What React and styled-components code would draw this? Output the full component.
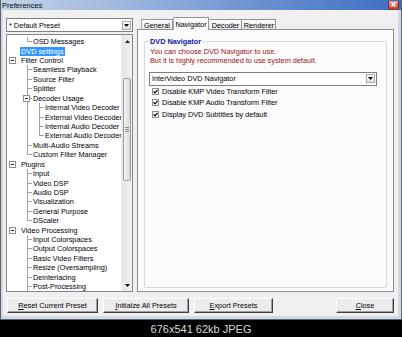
import React from 'react'
import styled, { createGlobalStyle } from 'styled-components'

const Global = createGlobalStyle`
  html, body { margin: 0; padding: 0; background: #000; }
  body { font-family: "Liberation Sans", Arial, sans-serif; }
`

const Shot = styled.div`
  width: 402px;
  height: 337px;
  display: flex;
  flex-direction: column;
  background: #000;
  overflow: hidden;
`

const Window = styled.div`
  height: 320px;
  box-sizing: border-box;
  display: flex;
  flex-direction: column;
  border: 1px solid #5b626d;
  border-top: none;
  background: #d3d9e2;
`

const TitleBar = styled.div`
  height: 10px;
  flex: none;
  display: flex;
  align-items: center;
  padding-left: 1px;
  background: linear-gradient(to right, #c3d2e8 0%, #9fb8de 30%, #6a90cf 65%, #3f6fc2 100%);
  font-size: 7.5px;
  color: #0c0c0c;
`

const CloseBox = styled.div`
  margin-left: auto;
  margin-right: 2px;
  width: 11px;
  height: 9px;
  box-sizing: border-box;
  border: 1px solid #7b3027;
  border-top: none;
  border-radius: 0 0 2px 2px;
  background: linear-gradient(#e9a38f, #c8402c);
  display: flex;
  align-items: center;
  justify-content: center;
`

const Body = styled.div`
  flex: 1;
  margin: 0 3px 3px 2px;
  padding: 7px 4px 3px 3px;
  background: #f0f0f0;
  display: flex;
  flex-direction: column;
  gap: 6px;
`

const Main = styled.div`
  height: 275px;
  display: flex;
  gap: 4px;
`

const LeftPane = styled.div`
  width: 127px;
  display: flex;
  flex-direction: column;
  gap: 2px;
  padding-top: 1px;
  box-sizing: border-box;
`

const Combo = styled.div`
  height: 14px;
  width: ${p => p.$w || 'auto'};
  flex: none;
  box-sizing: border-box;
  border: 1px solid #7f7f7f;
  background: #fff;
  display: flex;
  align-items: center;
  padding: 0 1px 0 2px;
  font-size: 7.3px;
  color: #000;
  margin-left: ${p => p.$ml || 0}px;
`

const ComboText = styled.span`
  flex: 1;
  white-space: nowrap;
`

const ComboButton = styled.span`
  width: 9px;
  height: 9px;
  box-sizing: border-box;
  border: 1px solid #a8a8a8;
  background: linear-gradient(#fbfbfb, #e4e4e4);
  display: flex;
  align-items: center;
  justify-content: center;
`

const Tree = styled.div`
  flex: 1;
  box-sizing: border-box;
  border: 1px solid #828790;
  background: #fff;
  display: flex;
  overflow: hidden;
`

const TreeList = styled.div`
  flex: 1;
  padding-top: 2px;
  overflow: hidden;
`

const Row = styled.div`
  height: 9.43px;
  display: flex;
  align-items: stretch;
  white-space: nowrap;
  font-size: 7.3px;
  color: #000;
`

const RootCell = styled.span`
  width: 13px;
  flex: none;
  display: flex;
  align-items: center;
  padding-left: 2px;
  box-sizing: border-box;
`

const Guide = styled.span`
  width: 12px;
  flex: none;
  background: ${p => (p.$on ? 'linear-gradient(#a3a3a3, #a3a3a3) 7px 0 / 1px 100% no-repeat' : 'none')};
`

const Branch = styled.span`
  width: 12px;
  flex: none;
  display: flex;
  align-items: center;
  padding-left: 3px;
  box-sizing: border-box;
  background:
    linear-gradient(#a3a3a3, #a3a3a3) 7px 0 / 1px ${p => (p.$more ? '100%' : '50%')} no-repeat,
    linear-gradient(#a3a3a3, #a3a3a3) 7px 50% / 5px 1px no-repeat;
`

const Expander = styled.span`
  width: 7px;
  height: 7px;
  box-sizing: border-box;
  border: 1px solid #8e8e8e;
  background: linear-gradient(#222, #222) center / 3px 1px no-repeat, #fff;
`

const Label = styled.span`
  align-self: center;
  line-height: 9px;
  padding: 0 1px;
  background: ${p => (p.$selected ? '#3399ff' : 'transparent')};
  color: ${p => (p.$selected ? '#fff' : '#000')};
`

const ScrollBar = styled.div`
  width: 10px;
  flex: none;
  display: flex;
  flex-direction: column;
  background: linear-gradient(to right, #e6e6e6, #f2f2f2);
  border-left: 1px solid #ececec;
`

const ScrollArrow = styled.div`
  height: 12px;
  display: flex;
  align-items: center;
  justify-content: center;
`

const Track = styled.div`
  flex: 1;
`

const Thumb = styled.div`
  margin: 0 1px;
  box-sizing: border-box;
  border: 1px solid #9c9c9c;
  border-radius: 2px;
  background:
    linear-gradient(#8a8a8a, #8a8a8a) center calc(50% - 2px) / 4px 1px no-repeat,
    linear-gradient(#8a8a8a, #8a8a8a) center 50% / 4px 1px no-repeat,
    linear-gradient(#8a8a8a, #8a8a8a) center calc(50% + 2px) / 4px 1px no-repeat,
    linear-gradient(to right, #f4f4f4, #d9d9d9);
`

const RightPane = styled.div`
  flex: 1;
  display: flex;
  flex-direction: column;
`

const TabStrip = styled.div`
  height: 13px;
  flex: none;
  display: flex;
  align-items: flex-end;
  padding-left: 4px;
  margin-bottom: -1px;
`

const Tab = styled.div`
  width: ${p => p.$w}px;
  height: ${p => (p.$active ? 13 : 11)}px;
  box-sizing: border-box;
  display: flex;
  align-items: center;
  justify-content: center;
  font-size: 7.3px;
  color: #000;
  border: 1px solid #8f939b;
  border-bottom: ${p => (p.$active ? 'none' : '1px solid #898c95')};
  border-left-color: ${p => (p.$first || p.$active ? '#a9adb4' : 'transparent')};
  background: ${p => (p.$active ? '#fbfbfb' : 'linear-gradient(#fbfbfb, #ececec)')};
  padding-top: ${p => (p.$active ? 0 : 1)}px;
  position: relative;
  z-index: ${p => (p.$active ? 1 : 0)};
`

const Panel = styled.div`
  flex: 1;
  box-sizing: border-box;
  border: 1px solid #898c95;
  background: #fbfbfb;
  display: flex;
  flex-direction: column;
`

const Group = styled.fieldset`
  flex: 1;
  margin: 7px 6px 3px 6px;
  padding: 0 5px;
  border: 1px solid #d5dbe2;
  border-radius: 2px;
  min-width: 0;
`

const Legend = styled.legend`
  padding: 0 1px;
  margin-left: -1px;
  font-size: 7.3px;
  font-weight: bold;
  line-height: 9px;
  color: #1020a8;
`

const Note = styled.div`
  font-size: 7.3px;
  line-height: 9.3px;
  color: #9a1414;
  margin-top: ${p => p.$mt || 0}px;
  white-space: nowrap;
`

const ComboWrap = styled.div`
  margin-top: 6px;
`

const CheckRow = styled.div`
  height: 11.6px;
  display: flex;
  align-items: center;
  gap: 3px;
  padding-left: 2px;
  font-size: 7.3px;
  color: #000;
  white-space: nowrap;
`

const CheckBox = styled.span`
  width: 7px;
  height: 7px;
  box-sizing: border-box;
  border: 1px solid #8f8f8f;
  background: #fff;
  display: flex;
  align-items: center;
  justify-content: center;
`

const ButtonRow = styled.div`
  height: 15px;
  flex: none;
  display: flex;
  gap: 5px;
  padding-left: 1px;
`

const Button = styled.div`
  width: ${p => p.$w}px;
  margin-left: ${p => (p.$push ? 'auto' : 0)};
  box-sizing: border-box;
  border: 1px solid;
  border-color: #ffffff #3f3f3f #3f3f3f #ffffff;
  box-shadow: inset -1px -1px 0 #a0a0a0;
  background: #ececec;
  display: flex;
  align-items: center;
  justify-content: center;
  font-size: 7.3px;
  color: #000;
  white-space: nowrap;
`

const Key = styled.span`
  text-decoration: underline;
`

const Caption = styled.div`
  flex: 1;
  display: flex;
  align-items: center;
  justify-content: center;
  color: #d9d9d9;
  font-size: 11px;
  padding-top: 1px;
`

const DownTri = () => (
  <svg width="5" height="3" viewBox="0 0 5 3">
    <polygon points="0,0 5,0 2.5,3" fill="#000" />
  </svg>
)

const UpTri = () => (
  <svg width="5" height="3" viewBox="0 0 5 3">
    <polygon points="0,3 5,3 2.5,0" fill="#222" />
  </svg>
)

const Tick = () => (
  <svg width="5" height="5" viewBox="0 0 5 5">
    <polyline points="0.5,2.3 2,3.8 4.6,0.8" fill="none" stroke="#000" strokeWidth="1.2" />
  </svg>
)

const tree = [
  { label: 'OSD Messages', depth: 1, more: false },
  { label: 'DVD settings', depth: 0, selected: true },
  { label: 'Filter Control', depth: 0, open: true },
  { label: 'Seamless Playback', depth: 1, more: true },
  { label: 'Source Filter', depth: 1, more: true },
  { label: 'Splitter', depth: 1, more: true },
  { label: 'Decoder Usage', depth: 1, more: true, open: true },
  { label: 'Internal Video Decoder', depth: 2, guides: [true], more: true },
  { label: 'External Video Decoder', depth: 2, guides: [true], more: true },
  { label: 'Internal Audio Decoder', depth: 2, guides: [true], more: true },
  { label: 'External Audio Decoder', depth: 2, guides: [true], more: false },
  { label: 'Multi-Audio Streams', depth: 1, more: true },
  { label: 'Custom Filter Manager', depth: 1, more: false },
  { label: 'Plugins', depth: 0, open: true },
  { label: 'Input', depth: 1, more: true },
  { label: 'Video DSP', depth: 1, more: true },
  { label: 'Audio DSP', depth: 1, more: true },
  { label: 'Visualization', depth: 1, more: true },
  { label: 'General Purpose', depth: 1, more: true },
  { label: 'DScaler', depth: 1, more: false },
  { label: 'Video Processing', depth: 0, open: true },
  { label: 'Input Colorspaces', depth: 1, more: true },
  { label: 'Output Colorspaces', depth: 1, more: true },
  { label: 'Basic Video Filters', depth: 1, more: true },
  { label: 'Resize (Oversampling)', depth: 1, more: true },
  { label: 'Deinterlacing', depth: 1, more: true },
  { label: 'Post-Processing', depth: 1, more: true },
]

const tabs = [
  { name: 'General', w: 32 },
  { name: 'Navigator', w: 36, active: true },
  { name: 'Decoder', w: 33 },
  { name: 'Renderer', w: 34 },
]

const checks = [
  'Disable KMP Video Transform Filter',
  'Disable KMP Audio Transform Filter',
  'Display DVD Subtitles by default',
]

export default function App() {
  return (
    <Shot>
      <Global />
      <Window>
        <TitleBar>
          Preferences
          <CloseBox>
            <svg width="5" height="5" viewBox="0 0 5 5">
              <path d="M0.5 0.5 L4.5 4.5 M4.5 0.5 L0.5 4.5" stroke="#fff" strokeWidth="1.3" />
            </svg>
          </CloseBox>
        </TitleBar>
        <Body>
          <Main>
            <LeftPane>
              <Combo>
                <ComboText>* Default Preset</ComboText>
                <ComboButton><DownTri /></ComboButton>
              </Combo>
              <Tree>
                <TreeList>
                  {tree.map(n => (
                    <Row key={n.label}>
                      <RootCell>{n.depth === 0 && n.open && <Expander />}</RootCell>
                      {(n.guides || []).map((g, i) => <Guide key={i} $on={g} />)}
                      {n.depth > 0 && <Branch $more={n.more}>{n.open && <Expander />}</Branch>}
                      <Label $selected={n.selected}>{n.label}</Label>
                    </Row>
                  ))}
                </TreeList>
                <ScrollBar>
                  <ScrollArrow><UpTri /></ScrollArrow>
                  <Track>
                    <Thumb style={{ marginTop: 31, height: 103 }} />
                  </Track>
                  <ScrollArrow><DownTri /></ScrollArrow>
                </ScrollBar>
              </Tree>
            </LeftPane>
            <RightPane>
              <TabStrip>
                {tabs.map((t, i) => (
                  <Tab key={t.name} $w={t.w} $active={t.active} $first={i === 0}>{t.name}</Tab>
                ))}
              </TabStrip>
              <Panel>
                <Group>
                  <Legend>DVD Navigator</Legend>
                  <Note $mt={1}>You can choose DVD Navigator to use.</Note>
                  <Note>But it is highly recommended to use system default.</Note>
                  <ComboWrap>
                    <Combo $w="228px" $ml={-1}>
                      <ComboText>InterVideo DVD Navigator</ComboText>
                      <ComboButton><DownTri /></ComboButton>
                    </Combo>
                  </ComboWrap>
                  {checks.map(c => (
                    <CheckRow key={c}>
                      <CheckBox><Tick /></CheckBox>
                      {c}
                    </CheckRow>
                  ))}
                </Group>
              </Panel>
            </RightPane>
          </Main>
          <ButtonRow>
            <Button $w={91}><Key>R</Key>eset Current Preset</Button>
            <Button $w={86}><Key>I</Key>nitialze All Presets</Button>
            <Button $w={79}><Key>E</Key>xport Presets</Button>
            <Button $w={58} $push><Key>C</Key>lose</Button>
          </ButtonRow>
        </Body>
      </Window>
      <Caption>676x541 62kb JPEG</Caption>
    </Shot>
  )
}
